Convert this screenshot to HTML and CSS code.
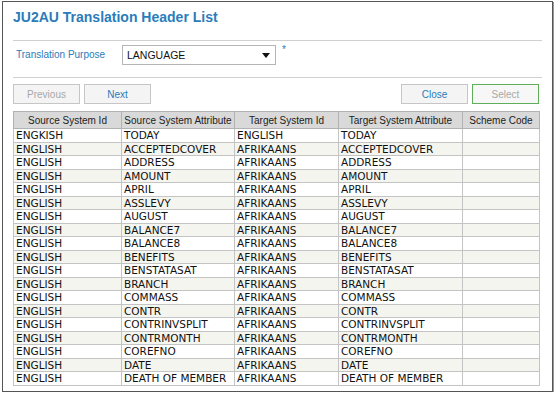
FILE: index.html
```html
<!DOCTYPE html>
<html>
<head>
    <title>JU2AU Translation Header List</title>
    <link rel="stylesheet" href="styles.css">
</head>
<body>
    <div class="panel">
        <div class="title-bar">
            <h1 class="title">JU2AU Translation Header List</h1>
        </div>

        <div class="filter-row">
            <label class="filter-label">Translation Purpose</label>
            <div class="select-box">
                <span>LANGUAGE</span>
                <span class="caret"></span>
            </div>
            <span class="required">*</span>
        </div>

        <div class="toolbar">
            <div class="btn-group">
                <button class="btn disabled">Previous</button>
                <button class="btn">Next</button>
            </div>
            <div class="btn-group">
                <button class="btn">Close</button>
                <button class="btn disabled select-btn">Select</button>
            </div>
        </div>

        <table class="grid">
            <thead>
                <tr>
                    <th class="c1">Source System Id</th>
                    <th class="c2">Source System Attribute</th>
                    <th class="c3">Target System Id</th>
                    <th class="c4">Target System Attribute</th>
                    <th class="c5">Scheme Code</th>
                </tr>
            </thead>
            <tbody>
                <tr><td>ENGKISH</td><td>TODAY</td><td>ENGLISH</td><td>TODAY</td><td></td></tr>
                <tr><td>ENGLISH</td><td>ACCEPTEDCOVER</td><td>AFRIKAANS</td><td>ACCEPTEDCOVER</td><td></td></tr>
                <tr><td>ENGLISH</td><td>ADDRESS</td><td>AFRIKAANS</td><td>ADDRESS</td><td></td></tr>
                <tr><td>ENGLISH</td><td>AMOUNT</td><td>AFRIKAANS</td><td>AMOUNT</td><td></td></tr>
                <tr><td>ENGLISH</td><td>APRIL</td><td>AFRIKAANS</td><td>APRIL</td><td></td></tr>
                <tr><td>ENGLISH</td><td>ASSLEVY</td><td>AFRIKAANS</td><td>ASSLEVY</td><td></td></tr>
                <tr><td>ENGLISH</td><td>AUGUST</td><td>AFRIKAANS</td><td>AUGUST</td><td></td></tr>
                <tr><td>ENGLISH</td><td>BALANCE7</td><td>AFRIKAANS</td><td>BALANCE7</td><td></td></tr>
                <tr><td>ENGLISH</td><td>BALANCE8</td><td>AFRIKAANS</td><td>BALANCE8</td><td></td></tr>
                <tr><td>ENGLISH</td><td>BENEFITS</td><td>AFRIKAANS</td><td>BENEFITS</td><td></td></tr>
                <tr><td>ENGLISH</td><td>BENSTATASAT</td><td>AFRIKAANS</td><td>BENSTATASAT</td><td></td></tr>
                <tr><td>ENGLISH</td><td>BRANCH</td><td>AFRIKAANS</td><td>BRANCH</td><td></td></tr>
                <tr><td>ENGLISH</td><td>COMMASS</td><td>AFRIKAANS</td><td>COMMASS</td><td></td></tr>
                <tr><td>ENGLISH</td><td>CONTR</td><td>AFRIKAANS</td><td>CONTR</td><td></td></tr>
                <tr><td>ENGLISH</td><td>CONTRINVSPLIT</td><td>AFRIKAANS</td><td>CONTRINVSPLIT</td><td></td></tr>
                <tr><td>ENGLISH</td><td>CONTRMONTH</td><td>AFRIKAANS</td><td>CONTRMONTH</td><td></td></tr>
                <tr><td>ENGLISH</td><td>COREFNO</td><td>AFRIKAANS</td><td>COREFNO</td><td></td></tr>
                <tr><td>ENGLISH</td><td>DATE</td><td>AFRIKAANS</td><td>DATE</td><td></td></tr>
                <tr><td>ENGLISH</td><td>DEATH OF MEMBER</td><td>AFRIKAANS</td><td>DEATH OF MEMBER</td><td></td></tr>
            </tbody>
        </table>
    </div>
</body>
</html>
```

FILE: styles.css
```css
body {
    margin: 0;
    padding: 0;
    background: #fff;
    font-family: 'Liberation Sans', Arial, sans-serif;
}

.panel {
    margin: 1px 0 0 2px;
    width: 529px;
    height: 381px;
    padding: 0 10px 8px 10px;
    border: 1px solid #555;
    box-shadow: 1px 1px 0 #999;
    background: #fff;
    overflow: hidden;
}

.title-bar {
    height: 38px;
    border-bottom: 1px solid #d0d0d0;
}

.title {
    margin: 0;
    padding-top: 7px;
    font-family: 'Liberation Sans', Arial, sans-serif;
    font-size: 14px;
    font-weight: bold;
    color: #2b7cba;
}

.filter-row {
    height: 32px;
    padding-top: 4px;
    display: flex;
    align-items: flex-start;
    border-bottom: 1px solid #d0d0d0;
}

.filter-label {
    width: 106px;
    padding: 4px 0 0 3px;
    font-size: 10px;
    color: #2b7cba;
}

.select-box {
    width: 143px;
    height: 18px;
    padding: 0 5px 0 4px;
    border: 1px solid #b5b5b5;
    display: flex;
    align-items: center;
    justify-content: space-between;
    font-size: 10.5px;
    color: #111;
}

.caret {
    width: 0;
    height: 0;
    border-left: 4px solid transparent;
    border-right: 4px solid transparent;
    border-top: 5px solid #111;
}

.required {
    margin: -1px 0 0 6px;
    font-size: 10px;
    color: #2b7cba;
}

.toolbar {
    display: flex;
    justify-content: space-between;
    padding: 6px 3px 0 0;
    height: 27px;
}

.btn-group {
    display: flex;
    gap: 4px;
}

.btn {
    width: 67px;
    height: 20px;
    padding: 0;
    border: 1px solid #c6c6c6;
    background: #f4f4f4;
    font-family: 'Liberation Sans', Arial, sans-serif;
    font-size: 10px;
    color: #2b7cba;
}

.btn.disabled {
    color: #a8a8a8;
}

.select-btn {
    border: 1px solid #5fae5a;
    background: #f7f7f7;
}

.grid {
    width: 527px;
    border-collapse: collapse;
}

.grid th {
    height: 16px;
    padding: 0;
    background: #d9d9d9;
    border: 1px solid #b2b2b2;
    font-family: 'Liberation Sans', Arial, sans-serif;
    font-size: 10px;
    font-weight: normal;
    color: #222;
    text-align: center;
    white-space: nowrap;
}

.grid td {
    height: 12.5px;
    padding: 0 0 0 2px;
    border: 1px solid #c4c4c4;
    font-family: 'DejaVu Sans', Verdana, sans-serif;
    font-size: 10.5px;
    color: #111;
    line-height: 12px;
    white-space: nowrap;
}

.grid tbody tr:nth-child(even) td {
    background: #f5f5f0;
}

.c1 { width: 107px; }
.c2 { width: 112px; }
.c3 { width: 103px; }
.c4 { width: 123px; }
```
